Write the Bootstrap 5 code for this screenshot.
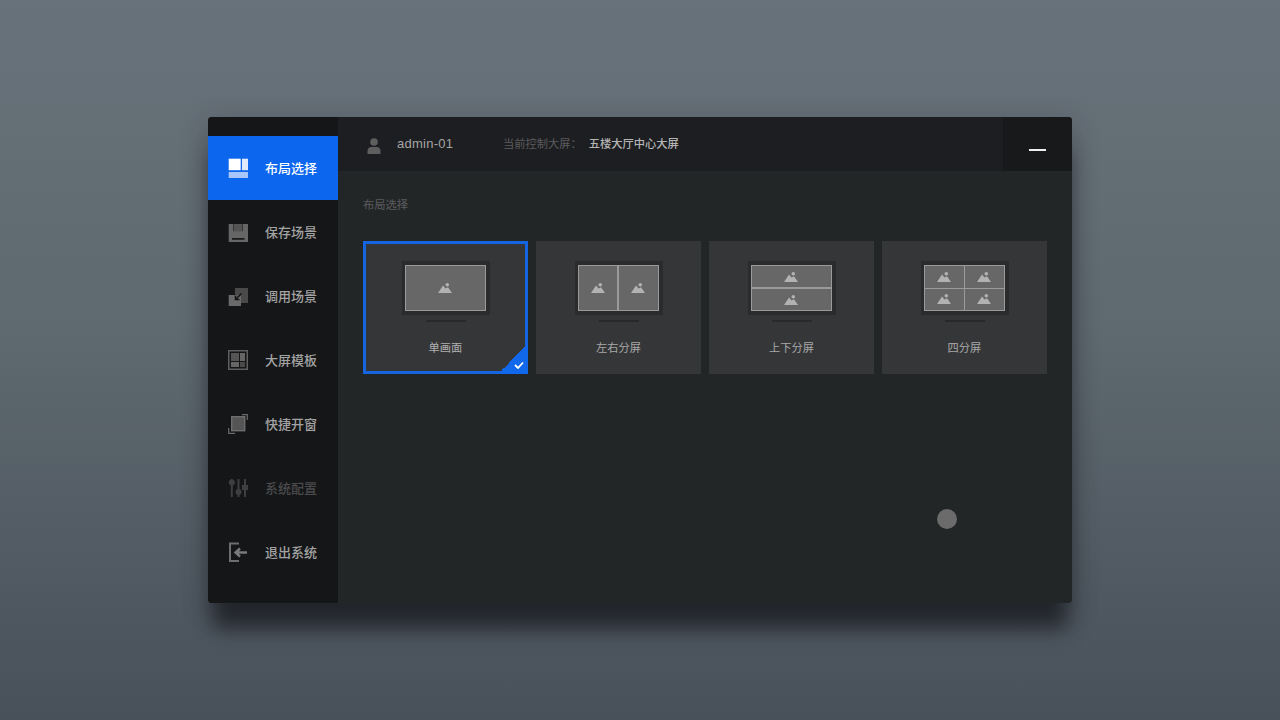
<!DOCTYPE html>
<html lang="zh-CN">
<head>
<meta charset="utf-8">
<title>布局选择</title>
<link href="https://cdn.jsdelivr.net/npm/bootstrap@5.3.0/dist/css/bootstrap.min.css" rel="stylesheet">
<style>
html,body{height:720px;overflow:hidden}
body{background:linear-gradient(180deg,#68727a 0%,#5f6970 45%,#48515a 100%);font-family:"Noto Sans CJK SC","Liberation Sans",sans-serif;padding:117px 208px 0}
.app-win{width:864px;height:486px;border-radius:4px;box-shadow:0 30px 20px -5px rgba(32,34,40,.92),0 6px 26px 2px rgba(30,34,40,.22);position:relative;background:#232627}
.side{width:130px;background:#151618;padding-top:19px;border-radius:4px 0 0 4px}
.side-link{height:64px;padding:0 0 0 20px;color:#a3a3a3;font-size:13px;font-weight:500;gap:17px;line-height:18px}
.side-link:hover,.side-link:focus{color:#a3a3a3}
.side-link.on,.side-link.on:hover{background:#0d66ee;color:#fff}
.side-link.off,.side-link.off:hover{color:#4a4a4c}
.side-link svg{width:20px;height:20px;flex:none}
.topbar{height:54px;background:#1d1e21;border-radius:0 4px 0 0}
.who{padding-left:29px;color:#a5a5a5;font-size:13px;font-family:"Liberation Sans",sans-serif;letter-spacing:.25px;gap:16px;width:165px}
.who svg{margin-top:3px}
.cap{color:#5c5c5e;font-size:11.25px;gap:7px;padding-bottom:2px}
.cap b{color:#b5b5b5;font-weight:500}
.mini{width:69px;height:54px;background:#18191b;border:0;border-radius:0 4px 0 0;padding:12px 0 0;display:flex;align-items:center;justify-content:center}
.mini i{display:block;width:17px;height:2px;background:#efefef}
.body-pane{padding:25px 25px 0}
.crumb{color:#5c5c5e;font-size:11.25px;line-height:16px;margin-bottom:29px}
.tiles{display:grid;grid-template-columns:repeat(4,165px);gap:8px}
.tile{height:133px;background:#353638;position:relative;color:#a8a8a8;font-size:11.25px;padding-top:20px}
.tile.sel{box-shadow:inset 0 0 0 3px #1565e0;color:#b0b0b0}
.tile.sel::after{content:"";position:absolute;right:0;bottom:0;width:30px;height:30px;background:linear-gradient(135deg,transparent 50%,#1268ea 50%)}
.tick{position:absolute;right:4px;bottom:5px;width:10px;height:8px;z-index:1}
.mon{width:88px;height:54px;background:#2a2b2d;padding:4px 4px 4px 3px}
.scr{height:46px;width:81px;border:1px solid #9a9a9a;background:#9a9a9a;display:grid;gap:1px}
.scr.c2{grid-template-columns:1fr 1fr;gap:2px}
.scr.r2{grid-template-rows:1fr 1fr;gap:2px}
.scr.q4{grid-template-columns:1fr 1fr;grid-template-rows:1fr 1fr}
.pane{background:#676767;display:flex;align-items:center;justify-content:center;min-height:0}
.pane svg{width:14px;height:10px}
.stand{width:40px;height:2px;background:#29292b;margin:5px auto 17px}
.dot{position:absolute;left:729px;top:392px;width:20px;height:20px;border-radius:50%;background:#6b6b6b}
</style>
</head>
<body>
<svg width="0" height="0" class="position-absolute">
  <symbol id="pic" viewBox="0 0 14 10"><circle cx="9.300" cy="1.800" r="1.800" fill="#b2b2b2"/><path fill="#b2b2b2" d="M0 10 5 2.600 7.600 5.400 10 4.200 14 10z"/></symbol>
</svg>
<div class="app-win d-flex">
  <nav class="side nav flex-column flex-nowrap">
    <a class="nav-link side-link on d-flex align-items-center" href="#">
      <svg viewBox="0 0 20 20"><rect x="0.700" y="0.700" width="12" height="11.500" fill="#fff"/><rect x="14" y="0.700" width="6" height="11.500" fill="#dfe9fb"/><rect x="0.700" y="14" width="19.300" height="6" fill="#a9c6fb"/></svg>布局选择</a>
    <a class="nav-link side-link d-flex align-items-center" href="#">
      <svg viewBox="0 0 20 20"><path fill="#666" d="M0.700 2h4.300v7h10V2h5v18H0.700z"/><rect x="5.500" y="2" width="9" height="7.500" fill="#555"/><rect x="4" y="16" width="12.500" height="1.800" fill="#1b1c1f"/></svg>保存场景</a>
    <a class="nav-link side-link d-flex align-items-center" href="#">
      <svg viewBox="0 0 20 20"><rect x="7" y="2" width="13" height="15" fill="#4a4a4a"/><rect x="0.700" y="9" width="12.300" height="12" fill="#6a6a6a"/><path d="M13.500 7.500 7.500 13.500M7.500 9.500v4h4" fill="none" stroke="#151618" stroke-width="1.600"/></svg>调用场景</a>
    <a class="nav-link side-link d-flex align-items-center" href="#">
      <svg viewBox="0 0 20 20"><rect x="0.750" y="0.750" width="18.500" height="18.500" fill="none" stroke="#5f5f5f" stroke-width="1.500"/><rect x="3" y="3" width="8" height="8" fill="#555"/><rect x="12" y="3" width="5" height="8" fill="#666"/><rect x="3" y="12" width="8" height="5" fill="#666"/><rect x="12" y="12" width="5" height="5" fill="#4a4a4a"/></svg>大屏模板</a>
    <a class="nav-link side-link d-flex align-items-center" href="#">
      <svg viewBox="0 0 20 20"><rect x="3.700" y="2.700" width="13" height="14" fill="#555" stroke="#6e6e6e" stroke-width="1.400"/><path d="M14 .7h5.300V6M.7 14v5.300H7" fill="none" stroke="#6a6a6a" stroke-width="1.200"/></svg>快捷开窗</a>
    <a class="nav-link side-link off d-flex align-items-center" href="#">
      <svg viewBox="0 0 20 20" fill="#3f3f41"><rect x="2.800" y="1" width="2" height="18"/><rect x="9.500" y="1" width="2" height="18"/><rect x="16" y="1" width="2" height="18"/><circle cx="3.800" cy="4.500" r="3"/><circle cx="10.500" cy="14" r="3"/><rect x="14" y="7" width="6" height="5"/></svg>系统配置</a>
    <a class="nav-link side-link d-flex align-items-center" href="#">
      <svg viewBox="0 0 20 20"><path d="M11 1.500H2v17.500h9" fill="none" stroke="#6e6e6e" stroke-width="2"/><path d="M19 10.500H8M12 6.500l-4.500 4 4.500 4" fill="none" stroke="#7a7a7a" stroke-width="2.400"/></svg>退出系统</a>
  </nav>
  <div class="flex-grow-1 d-flex flex-column">
    <header class="topbar d-flex align-items-center">
      <div class="who d-flex align-items-center">
        <svg width="14" height="16" viewBox="0 0 14 16"><circle cx="7" cy="4" r="3.800" fill="#5e5e5e"/><path fill="#5e5e5e" d="M0.500 16v-3c0-2.500 2-4 3.500-4h6c1.500 0 3.500 1.500 3.500 4v3z"/></svg>
        <span>admin-01</span>
      </div>
      <div class="cap d-flex align-items-center"><span>当前控制大屏：</span><b>五楼大厅中心大屏</b></div>
      <button class="mini ms-auto" type="button" aria-label="最小化"><i></i></button>
    </header>
    <main class="body-pane flex-grow-1">
      <div class="crumb">布局选择</div>
      <div class="tiles">
        <div class="tile sel d-flex flex-column align-items-center">
          <div class="mon"><div class="scr"><div class="pane"><svg><use href="#pic"/></svg></div></div></div>
          <div class="stand"></div><div>单画面</div>
          <svg class="tick" viewBox="0 0 10 8"><path d="M1 4l3 3 5-5.500" fill="none" stroke="#fff" stroke-width="1.800"/></svg>
        </div>
        <div class="tile d-flex flex-column align-items-center">
          <div class="mon"><div class="scr c2"><div class="pane"><svg><use href="#pic"/></svg></div><div class="pane"><svg><use href="#pic"/></svg></div></div></div>
          <div class="stand"></div><div>左右分屏</div>
        </div>
        <div class="tile d-flex flex-column align-items-center">
          <div class="mon"><div class="scr r2"><div class="pane"><svg><use href="#pic"/></svg></div><div class="pane"><svg><use href="#pic"/></svg></div></div></div>
          <div class="stand"></div><div>上下分屏</div>
        </div>
        <div class="tile d-flex flex-column align-items-center">
          <div class="mon"><div class="scr q4"><div class="pane"><svg><use href="#pic"/></svg></div><div class="pane"><svg><use href="#pic"/></svg></div><div class="pane"><svg><use href="#pic"/></svg></div><div class="pane"><svg><use href="#pic"/></svg></div></div></div>
          <div class="stand"></div><div>四分屏</div>
        </div>
      </div>
    </main>
  </div>
  <div class="dot"></div>
</div>
</body>
</html>
